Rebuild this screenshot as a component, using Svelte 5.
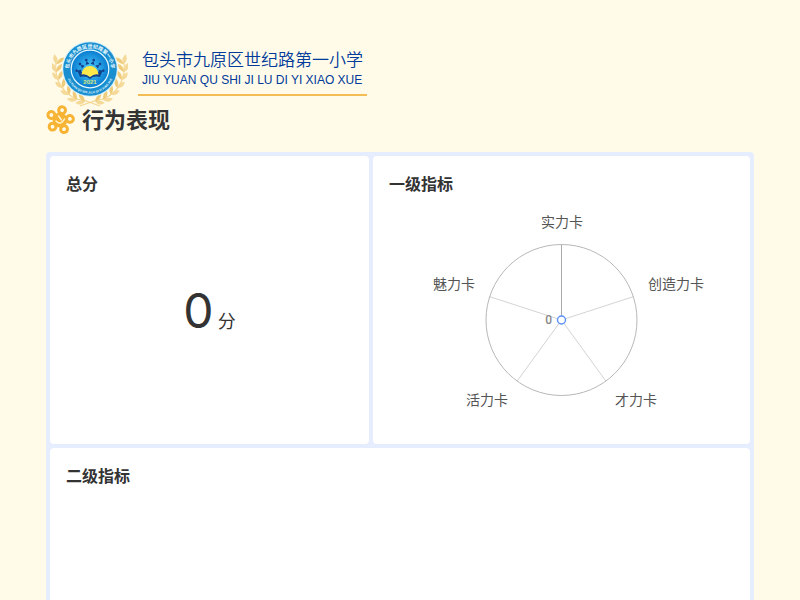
<script>
  const cx = 159.5;
  const cy = 120;
  const radius = 75.5;
  const indicators = [
    { name: '实力卡', anchor: 'middle', x: 160, y: 27 },
    { name: '创造力卡', anchor: 'start', x: 246, y: 89 },
    { name: '才力卡', anchor: 'start', x: 213, y: 205 },
    { name: '活力卡', anchor: 'end', x: 106, y: 205 },
    { name: '魅力卡', anchor: 'end', x: 73, y: 89 }
  ];
  const spokes = indicators.map((_, i) => {
    const a = (i * 2 * Math.PI) / indicators.length;
    return { x: cx + radius * Math.sin(a), y: cy - radius * Math.cos(a) };
  });
  const petals = [12, 84, 156, 228, 300];
  const leaves = [
    { x: 31, y: 61, r: -75 }, { x: 23, y: 59, r: -58 }, { x: 16, y: 53, r: -42 },
    { x: 10, y: 46, r: -28 }, { x: 6, y: 38, r: -14 }, { x: 4, y: 30, r: 0 }, { x: 5, y: 22, r: 12 }
  ];
  const rays = [-80, -48, -16, 16, 48, 80];
</script>

<div class="page">
  <header class="school">
    <svg class="emblem" width="76" height="68" viewBox="0 0 76 68" aria-hidden="true">
      <defs>
        <radialGradient id="disc"><stop offset="0" stop-color="#4fd0ff" /><stop offset="1" stop-color="#087bd0" /></radialGradient>
        <path id="arc-top" d="M20.8 41 A21 21 0 1 1 55.2 41" />
        <path id="arc-bottom" d="M14.6 36 A24.4 24.4 0 0 0 61.4 36" />
        <g id="branch">
          <path d="M5 18 C0 37 10 58 34 61 L48 66" fill="none" stroke="#f3d48c" stroke-width="1.1" />
          {#each leaves as l}
            <g transform="translate({l.x} {l.y}) rotate({l.r})">
              <path d="M0 2 C-5 0 -5 -4 -4 -7 C-1 -5 1 -2 0 2Z" fill="#f5d998" />
              <path d="M0 2 C5 0 6 -3 6 -6 C2 -5 0 -2 0 2Z" fill="#efcb7c" />
            </g>
          {/each}
        </g>
      </defs>
      <use href="#branch" />
      <use href="#branch" transform="translate(76 0) scale(-1 1)" />
      <circle cx="38" cy="29" r="27.8" fill="#d6f1fa" />
      <circle cx="38" cy="29" r="26.8" fill="#1a8fd0" />
      <circle cx="38" cy="29" r="18.8" fill="url(#disc)" stroke="#e6faff" stroke-width="1.2" />
      <text class="ring"><textPath href="#arc-top" startOffset="50%" text-anchor="middle">包头市九原区世纪路第一小学</textPath></text>
      <text class="ring latin"><textPath href="#arc-bottom" startOffset="50%" text-anchor="middle">JIU YUAN QU SHI JI LU DI YI XIAO XUE</textPath></text>
      {#each rays as r}
        <g transform="translate(38 33) rotate({r})">
          <path d="M-2 -9 L0 -12.5 L2 -9Z" fill="#14418d" />
          <circle cx="0" cy="-13.5" r="1.3" fill="#14418d" />
        </g>
      {/each}
      <path d="M25 30 Q32 32 38 37 Q44 32 51 30 L48 37 Q42 35.5 38 39 Q34 35.5 28 37Z" fill="#12458f" />
      <path d="M29.5 34.5 A8.5 8.5 0 0 1 46.5 34.5 Q42 33.5 38 37 Q34 33.5 29.5 34.5Z" fill="#ffe84a" />
      <text x="38" y="43.5" text-anchor="middle" class="year">2021</text>
    </svg>
    <div class="names">
      <div class="cn">包头市九原区世纪路第一小学</div>
      <div class="py">JIU YUAN QU SHI JI LU DI YI XIAO XUE</div>
    </div>
  </header>

  <h1>
    <svg width="28" height="28" viewBox="0 0 28 28" fill="none" stroke="#f7b334" overflow="visible" aria-hidden="true">
      {#each petals as p}
        <circle cx="14" cy="6" r="3.4" stroke-width="3" transform="rotate({p} 14 16)" />
      {/each}
      <circle cx="14" cy="16" r="7.4" fill="#f7b334" stroke="none" />
      <path d="M10 17 Q15 22 18.5 15 M12.5 12 L15.5 16" stroke="#fff3cf" stroke-width="1.5" stroke-linecap="round" />
    </svg>
    行为表现
  </h1>

  <main class="board">
    <section class="card">
      <h2>总分</h2>
      <div class="score"><span class="value">0</span><span class="unit">分</span></div>
    </section>
    <section class="card">
      <h2>一级指标</h2>
      <svg class="radar" width="319" height="228" viewBox="0 0 319 228" role="img" aria-label="一级指标">
        {#each spokes as s, i}
          <line x1={cx} y1={cy} x2={s.x} y2={s.y} stroke={i === 0 ? '#aaa' : '#d4d4d4'} />
        {/each}
        <circle {cx} {cy} r={radius} fill="none" stroke="#b8b8b8" />
        <circle {cx} {cy} r="4" fill="#fff" stroke="#5b8ff9" stroke-width="1.4" />
        <text class="tick" x="150" y="124" text-anchor="end">0</text>
        {#each indicators as n}
          <text class="label" x={n.x} y={n.y} text-anchor={n.anchor}>{n.name}</text>
        {/each}
      </svg>
    </section>
    <section class="card wide">
      <h2>二级指标</h2>
    </section>
  </main>
</div>

<style>
  :global(body) { margin: 0; background: #fffbe8; }
  .page {
    box-sizing: border-box;
    height: 100vh;
    overflow: hidden;
    padding: 40px 46px 0;
    color: #333;
    font-family: "Noto Sans CJK SC", sans-serif;
  }
  .school { display: flex; height: 64px; padding-left: 6px; }
  .emblem { flex: none; margin-right: 10px; }
  .names {
    box-sizing: border-box;
    height: 56px;
    padding: 7px 4px 0;
    border-bottom: 2px solid #f2bd55;
    color: #003a9b;
    white-space: nowrap;
  }
  .cn { font-size: 17px; line-height: 24px; font-weight: 350; }
  .py { font-family: "Liberation Sans", sans-serif; font-size: 12px; line-height: 18px; }
  h1 {
    display: flex;
    align-items: center;
    gap: 8px;
    margin: 0 0 20px;
    font-size: 22px;
    line-height: 28px;
    font-weight: 700;
  }
  .board {
    display: grid;
    grid-template-columns: 319fr 377fr;
    gap: 4px;
    padding: 4px;
    border-radius: 4px;
    background: #e6edfe;
  }
  .card {
    box-sizing: border-box;
    display: flex;
    flex-direction: column;
    min-height: 288px;
    padding: 16px;
    border-radius: 4px;
    background: #fff;
  }
  .wide { grid-column: 1 / -1; }
  h2 { margin: 0; font-size: 16px; line-height: 22px; font-weight: 700; }
  .score { display: flex; flex: 1; align-items: baseline; justify-content: center; gap: 4px; padding-top: 81px; }
  .value { font-family: Inter, sans-serif; font-size: 48px; line-height: 72px; font-weight: 400; }
  .unit { font-size: 18px; }
  .radar { align-self: center; margin-top: 6px; }
  .label { font-size: 14px; fill: #555; }
  .tick { font-family: Roboto, sans-serif; font-size: 12px; font-weight: 500; fill: #888; }
  .ring { font-size: 5px; font-weight: 700; fill: #eefcff; }
  .latin { font-family: "Liberation Sans", sans-serif; font-size: 3px; }
  .year { font-family: "Liberation Sans", sans-serif; font-size: 6px; font-weight: 700; fill: #d7e77d; }
</style>
